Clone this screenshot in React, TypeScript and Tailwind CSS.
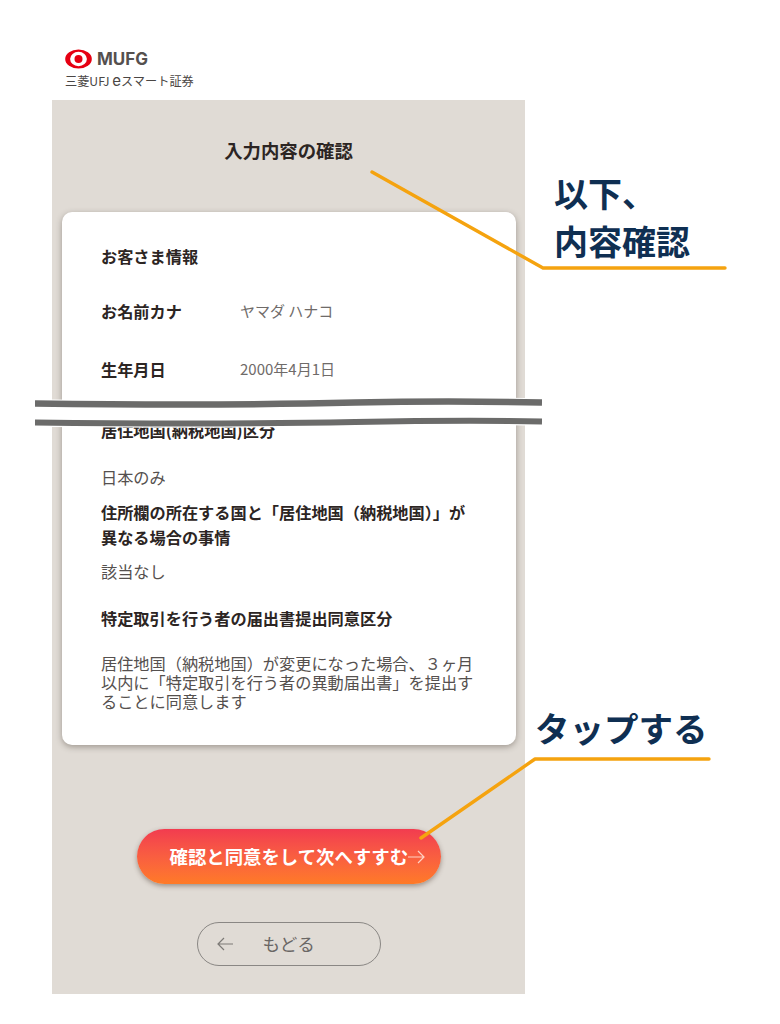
import React from "react";

const jp = "font-['Noto_Sans_CJK_JP','Noto_Sans',sans-serif]";

function Logo() {
  return (
    <div className="ml-[65px] h-[100px] pt-[48px] w-[200px]">
      <div className="flex items-center h-[22px] gap-[5px]">
        <svg width="27" height="20" viewBox="0 0 27 20" className="shrink-0">
          <ellipse cx="13.5" cy="10" rx="13.3" ry="9.6" fill="#e60012" />
          <ellipse cx="13.5" cy="10" rx="8.4" ry="7.2" fill="#fff" />
          <circle cx="13.5" cy="10" r="4" fill="#e60012" />
        </svg>
        <span className="font-['Inter',sans-serif] font-bold text-[17px] leading-none text-[#55504e]">MUFG</span>
      </div>
      <div className={`${jp} mt-[2px] text-[12.2px] leading-[18px] text-[#4a4644] whitespace-nowrap`}>三菱UFJ <span className="font-['Inter',sans-serif] text-[15px] leading-none">e</span>スマート証券</div>
    </div>
  );
}

function Row({ label, value, className }: { label: string; value: string; className?: string }) {
  return (
    <div className={`flex items-center h-[58px] ${className ?? ""}`}>
      <div className="w-[139px] text-[16.2px] font-bold text-[#2c2523]">{label}</div>
      <div className="text-[15px] text-[#6f6b69]">{value}</div>
    </div>
  );
}

export default function App() {
  return (
    <div className={`${jp} relative w-[780px] h-[1024px] bg-white overflow-hidden`}>
      <Logo />
      <main className="ml-[52px] w-[473px] h-[894px] bg-[#e0dbd5] flex flex-col items-center">
        <h1 className="mt-[36px] h-[28px] text-[18.4px] leading-[28px] font-bold text-[#2c2523]">入力内容の確認</h1>
        <section className="mt-[48px] self-start ml-[10px] w-[454px] h-[533px] shrink-0 bg-white rounded-[10px] shadow-[0_2px_6px_rgba(60,50,40,0.4)] pl-[39px] pr-[38px] pt-[15px]">
          <div className="h-[58px] flex items-center text-[16.2px] font-bold text-[#2c2523]">お客さま情報</div>
          <Row label="お名前カナ" value="ヤマダ ハナコ" className="-mt-[3px]" />
          <Row label="生年月日" value="2000年4月1日" />
          <div className="mt-[20px] text-[16.2px] leading-[24px] font-bold text-[#2c2523]">居住地国(納税地国)区分</div>
          <div className="mt-[23px] text-[16.2px] leading-[24px] text-[#55504e]">日本のみ</div>
          <div className="mt-[11px] text-[16.2px] leading-[25px] font-bold text-[#2c2523]">住所欄の所在する国と「居住地国（納税地国）」が異なる場合の事情</div>
          <div className="mt-[9px] text-[16.2px] leading-[24px] text-[#55504e]">該当なし</div>
          <div className="mt-[23px] text-[16.2px] leading-[24px] font-bold text-[#2c2523]">特定取引を行う者の届出書提出同意区分</div>
          <div className="mt-[24px] text-[16.2px] leading-[19px] text-[#55504e]">居住地国（納税地国）が変更になった場合、３ヶ月以内に「特定取引を行う者の異動届出書」を提出することに同意します</div>
        </section>
        <button className="mt-[84px] w-[304px] h-[55px] shrink-0 rounded-full bg-gradient-to-b from-[#f23b4f] to-[#ff7a26] shadow-[0_2px_5px_rgba(70,50,40,0.45)] text-white text-[18.4px] font-bold flex items-center pl-[33px]">
          <span className="whitespace-nowrap">確認と同意をして次へすすむ</span>
          <svg width="17" height="14" viewBox="0 0 17 14" fill="none" stroke="#ffd2c4" strokeWidth="1.2" className="shrink-0"><path d="M0 7H16M10 1l6 6-6 6" /></svg>
        </button>
        <button className="mt-[38px] w-[184px] h-[44px] shrink-0 rounded-full border border-[#8a8784] flex items-center pl-[19px] text-[#6a6765] text-[17.6px]">
          <svg width="16" height="14" viewBox="0 0 16 14" fill="none" stroke="#7d7a77" strokeWidth="1.2"><path d="M16 7H1M7 1L1 7l6 6" /></svg>
          <span className="ml-[30px]">もどる</span>
        </button>
      </main>

      {/* torn-page break drawn over the card */}
      <svg className="absolute left-[35px] top-[394px]" width="507" height="36" viewBox="0 0 507 36" fill="none">
        <path d="M0 9H507V27H0Z" fill="#fff" />
        <path d="M0 9.5C120 11 240 10.5 320 8.5C400 6.8 460 7.5 507 8.5" stroke="#fff" strokeWidth="8.5" />
        <path d="M0 28.5C120 30 240 29.5 320 28C400 26.5 460 26.5 507 27.5" stroke="#fff" strokeWidth="8.5" />
        <path d="M0 9.5C120 11 240 10.5 320 8.5C400 6.8 460 7.5 507 8.5" stroke="#6b6b6a" strokeWidth="6.5" />
        <path d="M0 28.5C120 30 240 29.5 320 28C400 26.5 460 26.5 507 27.5" stroke="#6b6b6a" strokeWidth="6" />
      </svg>

      {/* annotations */}
      <svg className="absolute left-0 top-0 pointer-events-none" width="780" height="1024" fill="none" stroke="#f5a30f" strokeWidth="3.4" strokeLinecap="round" strokeLinejoin="round">
        <path d="M372 172L543 268H725" />
        <path d="M421 838L535 759H709" />
      </svg>
      <div className="absolute left-[554px] top-[169px] text-[34px] leading-[48px] font-bold text-[#0f2f52] whitespace-nowrap">
        以下、<br />内容確認
      </div>
      <div className="absolute left-[535px] top-[703px] text-[34.5px] leading-[49px] font-bold text-[#0f2f52] whitespace-nowrap">タップする</div>
    </div>
  );
}
